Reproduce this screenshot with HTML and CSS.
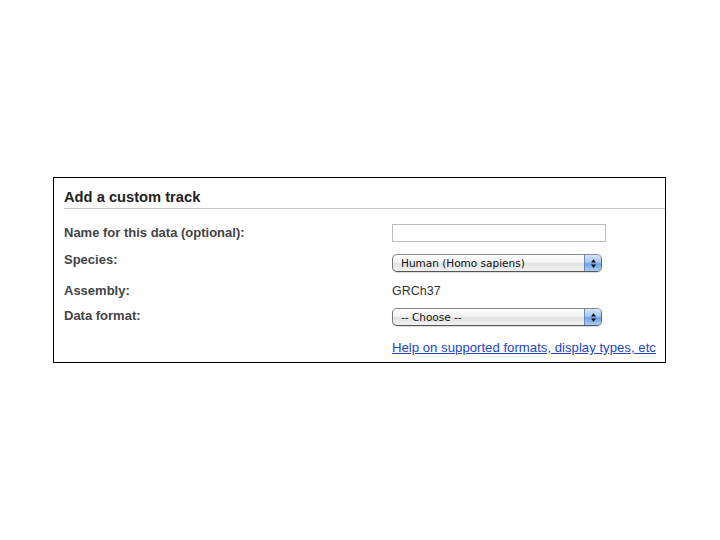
FILE: index.html
```html
<!DOCTYPE html>
<html>
<head>
<meta charset="utf-8">
<link rel="stylesheet" href="styles.css">
</head>
<body>
<div class="page">
  <div class="panel">
    <h2 class="heading">Add a custom track</h2>
    <div class="row row-name">
      <div class="label">Name for this data (optional):</div>
      <div class="field"><input class="text-input" type="text"></div>
    </div>
    <div class="row row-species">
      <div class="label">Species:</div>
      <div class="field">
        <div class="select select-species">
          <span class="select-text">Human (Homo sapiens)</span>
          <span class="select-btn"><svg width="7" height="11" viewBox="0 0 7 11"><path d="M3.5 1 L6 4.5 H1 Z M3.5 10 L6 6.5 H1 Z" fill="#111"/></svg></span>
        </div>
      </div>
    </div>
    <div class="row row-assembly">
      <div class="label">Assembly:</div>
      <div class="field value">GRCh37</div>
    </div>
    <div class="row row-format">
      <div class="label">Data format:</div>
      <div class="field">
        <div class="select select-format">
          <span class="select-text">-- Choose --</span>
          <span class="select-btn"><svg width="7" height="11" viewBox="0 0 7 11"><path d="M3.5 1 L6 4.5 H1 Z M3.5 10 L6 6.5 H1 Z" fill="#111"/></svg></span>
        </div>
      </div>
    </div>
    <div class="row row-help">
      <div class="label"></div>
      <div class="field"><a class="help" href="#">Help on supported formats, display types, etc</a></div>
    </div>
  </div>
</div>
</body>
</html>
```
FILE: styles.css
```css
html, body {
  margin: 0;
  padding: 0;
  background: #fff;
}
body {
  font-family: "Liberation Sans", Arial, sans-serif;
  color: #333;
}
.page {
  padding: 177px 0 0 53px;
}
.panel {
  width: 611px;
  border: 1px solid #000;
  padding-bottom: 7px;
}
.heading {
  margin: 0 0 0 10px;
  padding: 10px 0 2px;
  font-size: 14.7px;
  line-height: 18px;
  font-weight: bold;
  color: #222;
  border-bottom: 1px solid #c8c8c8;
}
.row {
  display: flex;
  margin-left: 10px;
}
.label {
  width: 328px;
  flex: none;
  font-size: 13px;
  line-height: 15px;
  font-weight: bold;
  color: #444;
}
.field {
  font-size: 12px;
  line-height: 14px;
}
.row-name { margin-top: 15px; }
.row-name .label { padding-top: 1px; }
.row-species { margin-top: 8px; }
.row-species .label { padding-top: 2px; }
.row-species .field { padding-top: 4px; }
.row-assembly { margin-top: 11px; }
.value { color: #333; font-size: 12.5px; line-height: 15px; padding-top: 1px; }
.row-format { margin-top: 9px; }
.row-help { margin-top: 14px; }
.text-input {
  display: block;
  box-sizing: border-box;
  width: 214px;
  height: 18px;
  margin: 0;
  border: 1px solid #bdbdbd;
  background: #fff;
  padding: 0 3px;
}
.select {
  display: flex;
  box-sizing: border-box;
  height: 18px;
  border: 1px solid #6f6f6f;
  border-color: #8a8a8a #6a6a6a #555 #777;
  border-radius: 5px;
  overflow: hidden;
  background: linear-gradient(#ffffff 0%, #f4f4f4 45%, #e2e2e2 55%, #f2f2f2 100%);
  box-shadow: 0 1px 1px rgba(0,0,0,0.15);
}
.select-species { width: 210px; }
.select-format { width: 210px; }
.select-text {
  flex: 1;
  padding-left: 8px;
  font-family: "DejaVu Sans", sans-serif;
  font-size: 10.5px;
  line-height: 16px;
  color: #111;
  white-space: nowrap;
}
.select-btn {
  width: 16px;
  flex: none;
  display: flex;
  align-items: center;
  justify-content: center;
  border-left: 1px solid #6c88b8;
  background: linear-gradient(#d3e4fb 0%, #a9c8f3 45%, #6fa0e8 55%, #a8cdf6 100%);
}
.help {
  font-size: 13.2px;
  line-height: 15px;
  color: #2346c6;
  text-decoration: underline;
}
```
